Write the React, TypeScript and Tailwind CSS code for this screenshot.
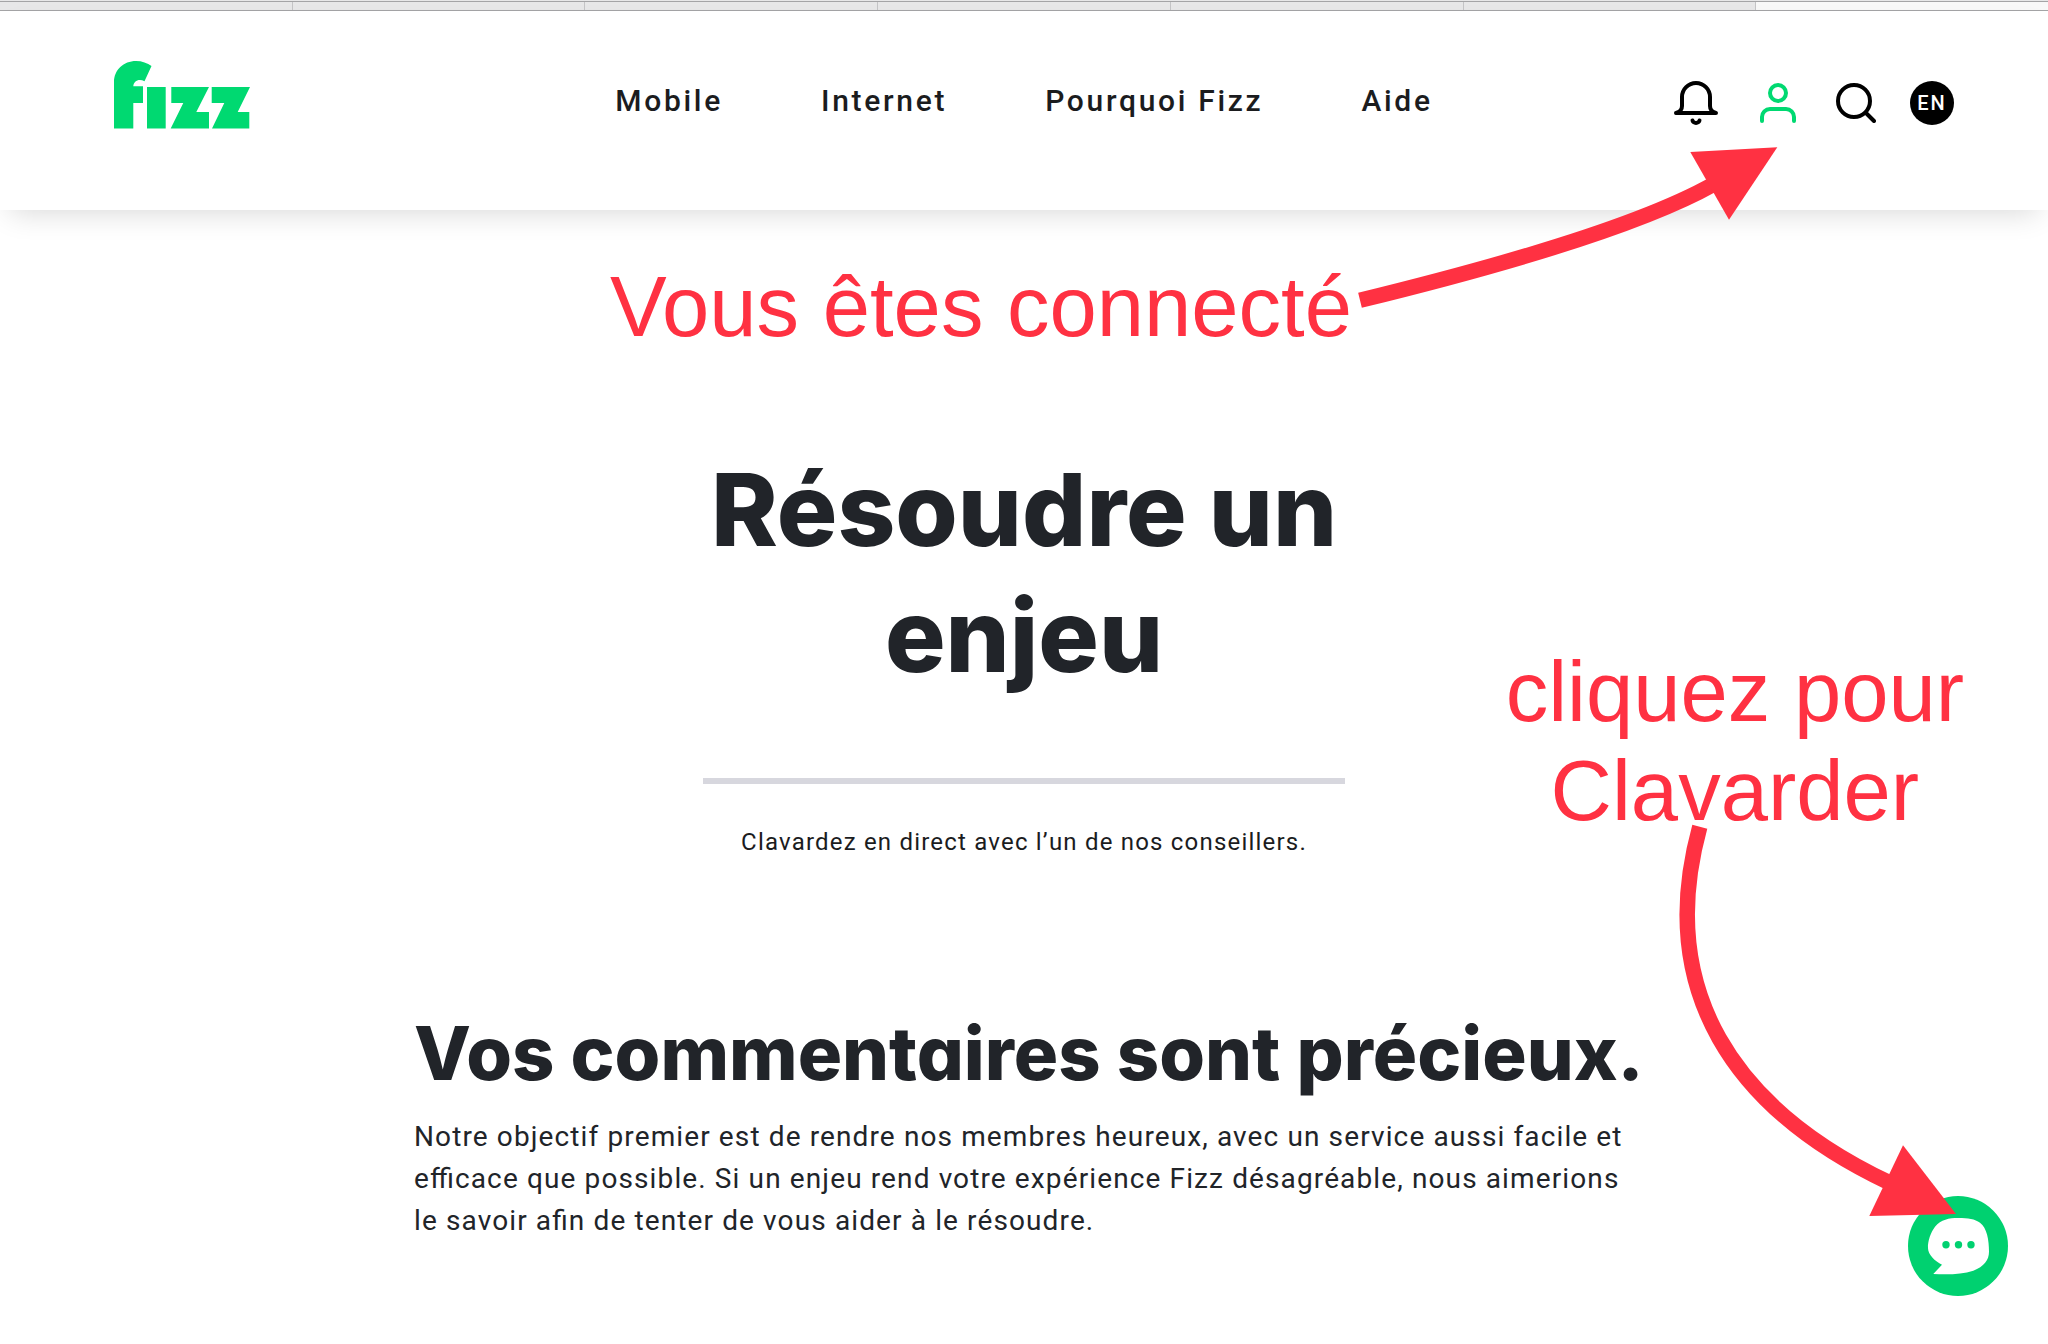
const tabs = ["tab-1", "tab-2", "tab-3", "tab-4", "tab-5", "tab-6"];

const links = [
  { label: "Mobile", href: "#mobile" },
  { label: "Internet", href: "#internet" },
  { label: "Pourquoi Fizz", href: "#pourquoi-fizz" },
  { label: "Aide", href: "#aide" },
];

function Logo() {
  return (
    <svg width="136" height="68" viewBox="0 0 136 68" fill="#00d971" aria-hidden="true">
      <path d="M0 67.500V21C0 9 9.500 0 22 0c6 0 11.500 2 15.500 5l-7 15.300C25 17 19.500 20 19.300 25.300H29V42h-9.700v25.500z" />
      <path d="M33 26h18.700v41.500H33z" />
      <path d="M57.300 26H95L82.300 51H95v16.500H56.700L69.300 42H57.300z" />
      <path d="M97.700 26H136l-12.300 25h11.600v16.500H98L110.300 42H97.700z" />
    </svg>
  );
}

function BellIcon() {
  return (
    <svg width="48" height="44" viewBox="-2 0 48 44" fill="none" stroke="#000" strokeWidth="4" strokeLinecap="round" strokeLinejoin="round">
      <path d="M2 32h40c-4-1-6-3-6-7v-9a14 14 0 0 0-28 0v9c0 4-2 6-6 7z" />
      <path d="M18.500 39.500c1 3.200 6 3.200 7 0" />
    </svg>
  );
}

function UserIcon() {
  return (
    <svg width="48" height="40" viewBox="-6 0 48 40" fill="none" stroke="#00d971" strokeWidth="4" strokeLinecap="round">
      <circle cx="18" cy="10" r="8" />
      <path d="M2 38v-4a8 8 0 0 1 8-8h16a8 8 0 0 1 8 8v4" />
    </svg>
  );
}

function SearchIcon() {
  return (
    <svg width="40" height="40" viewBox="0 0 40 40" fill="none" stroke="#000" strokeWidth="4" strokeLinecap="round">
      <circle cx="18" cy="18" r="16" />
      <path d="M30.500 30.500 38 38" />
    </svg>
  );
}

function ChatIcon() {
  return (
    <svg width="100" height="100" viewBox="0 0 100 100" aria-hidden="true">
      <path
        fill="#fff"
        d="M25.300 78 34 68.700C27 65.500 20 58.500 20 52.300 19.500 45 23 36 27 30.700 33 23.500 41 22 50.300 22 60 22 67 23 72 26.700 79 32 81 44 81 55.700 81 64 76 70.500 65.300 74.700 54 78.500 40 78.600 25.300 78z"
      />
      <g fill="#00d170">
        <circle cx="38" cy="48.700" r="3.700" />
        <circle cx="50.500" cy="48.700" r="3.700" />
        <circle cx="63" cy="48.700" r="3.700" />
      </g>
    </svg>
  );
}

function TabStrip() {
  return (
    <div className="bg-[#e7e7e8] pt-px">
      <div className="flex h-[10px] border-y border-[#a4a4a6]">
        {tabs.map((t) => (
          <div key={t} className="flex-1 border-r border-[#c4c4c6]" />
        ))}
        <div className="flex-1 bg-[#f8f8f8]" />
      </div>
    </div>
  );
}

function Header() {
  return (
    <header className="relative grid grid-cols-[1fr_auto_1fr] items-start bg-white pt-[50px] pb-[81px] shadow-[0_12px_28px_-10px_rgba(0,0,0,0.16)]">
      <a href="#accueil" aria-label="Fizz" className="justify-self-start pl-[114px]">
        <Logo />
      </a>
      <nav className="flex gap-[98px] pt-4 text-[30px] leading-[48px] font-medium tracking-[0.09em] whitespace-nowrap text-[#1b1c1e]">
        {links.map((l) => (
          <a key={l.label} href={l.href}>
            {l.label}
          </a>
        ))}
      </nav>
      <div className="flex items-center justify-end gap-[34px] pt-[20px] pr-[94px]">
        <button type="button" aria-label="Notifications">
          <BellIcon />
        </button>
        <button type="button" aria-label="Mon compte">
          <UserIcon />
        </button>
        <button type="button" aria-label="Rechercher">
          <SearchIcon />
        </button>
        <a
          href="#en"
          className="flex size-11 items-center justify-center rounded-full bg-black text-[20px] font-medium tracking-widest text-white"
        >
          EN
        </a>
      </div>
    </header>
  );
}

function Annotations() {
  return (
    <div className="pointer-events-none absolute inset-0 z-20 text-center font-['Liberation_Sans',sans-serif] text-[85px] leading-[99px] text-[#ff3142]">
      <p className="absolute top-[257px] right-[696px] whitespace-nowrap">Vous êtes connecté</p>
      <svg className="absolute top-[145px] right-[268px]" width="424" height="170" viewBox="1356 145 424 170">
        <path d="M1360 300.300Q1621 236.500 1714 184" fill="none" stroke="#ff3142" strokeWidth="15.500" />
        <path d="M1690.300 152 1777.300 147.300 1729 219.700z" fill="#ff3142" />
      </svg>

      <p className="absolute top-[642px] right-[84px] whitespace-nowrap">
        cliquez pour
        <br />
        Clavarder
      </p>
      <svg className="absolute top-[820px] right-[88px]" width="290" height="400" viewBox="1670 820 290 400">
        <path d="M1699.800 826.700C1655 990 1733 1109 1890 1183" fill="none" stroke="#ff3142" strokeWidth="15.500" />
        <path d="M1903 1145.300 1956 1214 1869.300 1216z" fill="#ff3142" />
      </svg>
    </div>
  );
}

export default function App() {
  return (
    <div className="relative min-h-screen overflow-hidden bg-white font-['Roboto',sans-serif] text-[#212429]">
      <TabStrip />
      <Header />

      <main className="mx-auto max-w-[1220px] pt-[236px]">
        {/* Title + live chat line */}
        <section className="mx-auto max-w-[642px] text-center">
          <h1 className="font-['Inter',sans-serif] text-[101px] leading-[126px] font-extrabold [font-feature-settings:'cv11']">
            Résoudre un enjeu
          </h1>
          <hr className="mt-20 border-t-6 border-[#d7d7de]" />
          <p className="mt-10 text-[24px] leading-[36px] tracking-wider text-[#1b1c1e]">
            Clavardez en direct avec l’un de nos conseillers.
          </p>
        </section>

        {/* Feedback */}
        <section className="mt-[148px]">
          <h2 className="font-['Inter',sans-serif] text-[74px] leading-[90px] font-extrabold whitespace-nowrap [font-feature-settings:'cv11']">
            Vos commentaires sont précieux.
          </h2>
          <p className="mt-[18px] text-[28px] leading-[42px] tracking-[0.04em] [font-feature-settings:'liga']">
            Notre objectif premier est de rendre nos membres heureux, avec un service aussi facile et
            efficace que possible. Si un enjeu rend votre expérience Fizz désagréable, nous aimerions
            le savoir afin de tenter de vous aider à le résoudre.
          </p>
        </section>
      </main>

      <button
        type="button"
        aria-label="Clavarder"
        className="fixed right-10 bottom-12 z-10 size-[100px] rounded-full bg-[#00d170]"
      >
        <ChatIcon />
      </button>

      <Annotations />
    </div>
  );
}
